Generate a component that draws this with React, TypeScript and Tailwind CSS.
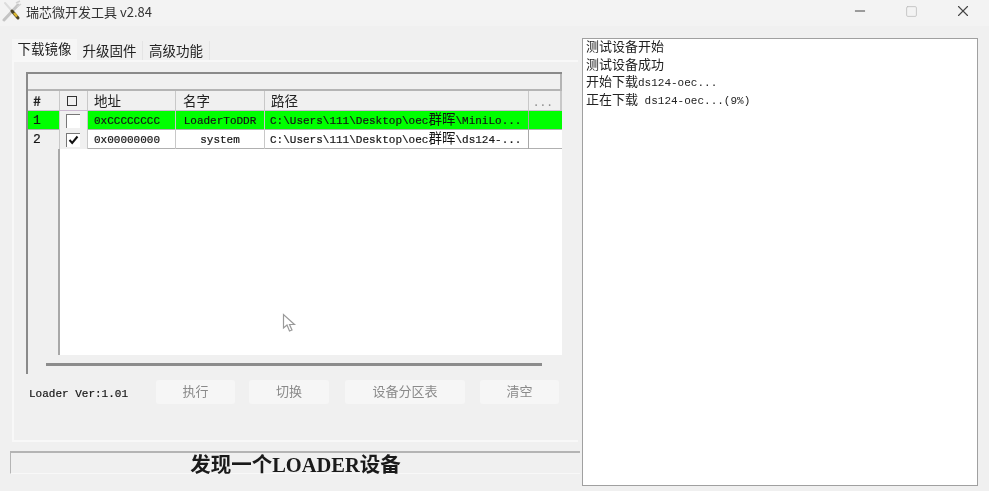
import { Minus, Square, X } from 'lucide-react';

const cjk = 'font-["Noto_Sans_CJK_SC",sans-serif]';
const mono = 'font-["Liberation_Mono","Noto_Sans_CJK_SC",monospace]';
const cols = 'grid grid-cols-[32px_28px_88px_89px_264px_1fr]';

const logLines = [
    { zh: '测试设备开始', en: '' },
    { zh: '测试设备成功', en: '' },
    { zh: '开始下载', en: 'ds124-oec...' },
    { zh: '正在下载', en: ' ds124-oec...(9%)' },
];

const rows = [
    {
        id: 1,
        checked: false,
        addr: '0xCCCCCCCC',
        name: 'LoaderToDDR',
        tail: '\\MiniLo...',
        green: true,
    },
    {
        id: 2,
        checked: true,
        addr: '0x00000000',
        name: 'system',
        tail: '\\ds124-...',
        green: false,
    },
];

function ToolsIcon() {
    return (
        <svg width="20" height="22" viewBox="0 0 20 22" fill="none">
            <path d="M2 20 L16 5" stroke="#c4c4c4" strokeWidth="3" strokeLinecap="round" />
            <path d="M14 3 L18 1 M15 7 L19 4" stroke="#d2d2d2" strokeWidth="1.5" />
            <path d="M3 3 L10 11" stroke="#dcdcdc" strokeWidth="2" strokeLinecap="round" />
            <path d="M10 11 L16 18" stroke="#4a4326" strokeWidth="3" strokeLinecap="round" />
            <path d="M12 13 L15 16.5" stroke="#d9b52f" strokeWidth="2.5" />
        </svg>
    );
}

function HeaderCell({ children, className = '' }: { children?: React.ReactNode; className?: string }) {
    return (
        <div className={`flex items-center border-r border-[#c8c8c8] bg-[#f0f0f0] text-[13.5px] leading-none text-[#222] ${className}`}>
            {children}
        </div>
    );
}

function Check({ checked }: { checked: boolean }) {
    return (
        <div className="flex h-[14px] w-[14px] items-center justify-center border-t border-l border-[#777] bg-white">
            {checked && (
                <svg width="11" height="10" viewBox="0 0 11 10" fill="none">
                    <path d="M1.5 5 L4.2 8 L9.5 1.5" stroke="#111" strokeWidth="2" />
                </svg>
            )}
        </div>
    );
}

function ActionButton({ label, className }: { label: string; className: string }) {
    return (
        <button className={`h-[24px] rounded-[3px] bg-[#f6f6f6] pb-[2px] text-[13px] text-[#8a8a8a] ${className}`}>{label}</button>
    );
}

export default function App() {
    return (
        <div className={`relative flex h-[491px] w-[989px] flex-col overflow-hidden bg-[#f0f0f0] blur-[0.5px] ${cjk}`}>
            {/* title bar */}
            <div className="flex h-[26px] items-start bg-[#f3f3f3] pl-[2px]">
                <ToolsIcon />
                <span className="ml-[4px] mt-[5px] text-[13px] leading-none text-[#333]">瑞芯微开发工具 v2.84</span>
                <div className="ml-auto mt-[2px] flex items-center gap-[36.5px] pr-[17px] text-[#444]">
                    <Minus size={16} strokeWidth={1.5} />
                    <Square size={13} strokeWidth={1.5} className="text-[#bdbdbd]" />
                    <X size={18} strokeWidth={1.5} />
                </div>
            </div>

            <div className="flex flex-1">
                {/* left side */}
                <div className="flex w-[582px] flex-col">
                    <div className="ml-[12px] mt-[13px] flex h-[21px] items-end text-[13.5px] text-[#222]">
                        <div className="flex h-[21px] w-[65px] items-center justify-center bg-[#f6f6f6] pb-[3px]">下载镜像</div>
                        <div className="flex h-[19px] w-[66px] items-center justify-center border-r border-[#e4e4e4]">升级固件</div>
                        <div className="flex h-[19px] w-[67px] items-center justify-center border-r border-[#e4e4e4]">高级功能</div>
                    </div>

                    <div className="ml-[12px] flex h-[382px] w-[566px] flex-col border-l-2 border-b-2 border-t-2 border-[#f8f8f8] pl-[12px] pt-[10px]">
                        {/* list box */}
                        <div className="flex h-[302px] w-[536px] flex-col border-t-2 border-l-2 border-[#8a8a8a]">
                            <div className="h-[17px] border-b-2 border-r-2 border-[#b4b4b4]" />
                            <div className={`${cols} h-[20px] border-b border-[#cbb8d0]`}>
                                <HeaderCell className="pl-[5px] font-bold">#</HeaderCell>
                                <HeaderCell className="pl-[7px]">
                                    <div className="h-[10px] w-[10px] border border-[#333]" />
                                </HeaderCell>
                                <HeaderCell className="pl-[6px]">地址</HeaderCell>
                                <HeaderCell className="pl-[7px]">名字</HeaderCell>
                                <HeaderCell className="pl-[6px]">路径</HeaderCell>
                                <HeaderCell className="items-end justify-center border-r-2 pb-[3px] text-[10px] tracking-[3px] text-[#888]">...</HeaderCell>
                            </div>

                            {rows.map(row => (
                                <div
                                    key={row.id}
                                    className={`${cols} h-[19px] border-b border-[#b0b0b0] text-[11px] text-[#111] [-webkit-text-stroke:0.2px_#222] ${mono} ${row.green ? 'bg-[#00ff00]' : 'bg-white'}`}
                                >
                                    <div className={`flex items-center border-r border-[#c8c8c8] pl-[5px] text-[13px] ${row.green ? '' : 'bg-[#f0f0f0]'}`}>
                                        {row.id}
                                    </div>
                                    <div className="flex items-center border-r border-[#c8c8c8] bg-[#f0f0f0] pl-[6px]">
                                        <Check checked={row.checked} />
                                    </div>
                                    <div className="flex items-center border-r border-[#c8c8c8] pl-[6px]">{row.addr}</div>
                                    <div className="flex items-center justify-center border-r border-[#c8c8c8]">{row.name}</div>
                                    <div className="flex items-center overflow-hidden whitespace-nowrap border-r border-[#a8a8a8] pl-[5px]">
                                        C:\Users\111\Desktop\oec<span className="text-[13.5px] [-webkit-text-stroke:0px]">群晖</span>{row.tail}
                                    </div>
                                    <div />
                                </div>
                            ))}

                            <div className="flex flex-1">
                                <div className="w-[32px] border-r-2 border-[#a8a8a8] bg-[#f0f0f0]" />
                                <div className="flex-1 bg-white" />
                            </div>

                            <div className="flex h-[19px] items-center pl-[18px]">
                                <div className="h-[3px] w-[496px] bg-[#8c8c8c]" />
                            </div>
                        </div>

                        {/* buttons row */}
                        <div className="mt-[6px] flex w-[536px] items-center">
                            <span className={`ml-[3px] w-[127px] pt-[4px] text-[11px] text-[#111] [-webkit-text-stroke:0.2px_#222] ${mono}`}>Loader Ver:1.01</span>
                            <ActionButton label="执行" className="w-[79px]" />
                            <ActionButton label="切换" className="ml-[14px] w-[80px]" />
                            <ActionButton label="设备分区表" className="ml-[16px] w-[120px]" />
                            <ActionButton label="清空" className="ml-[15px] w-[79px]" />
                        </div>
                    </div>

                    {/* status bar */}
                    <div className="ml-[10px] mt-[9px] flex h-[23px] w-[570px] items-center justify-center border-l border-t-2 border-[#b4b4b4] border-b border-b-[#f8f8f8] pt-[5px]">
                        <span className='font-["Liberation_Serif","Noto_Sans_CJK_SC",serif] text-[20.5px] font-bold leading-none text-[#1a1a1a]'>
                            发现一个LOADER设备
                        </span>
                    </div>
                </div>

                {/* log */}
                <div className="mt-[12px] h-[448px] w-[396px] border border-[#a0a0a0] bg-white pl-[3px]">
                    {logLines.map(line => (
                        <div key={line.zh + line.en} className={`h-[17.5px] whitespace-pre text-[13px] leading-[17.5px] text-[#222] ${mono}`}>
                            {line.zh}
                            <span className="text-[11px]">{line.en}</span>
                        </div>
                    ))}
                </div>
            </div>

            {/* mouse pointer captured in the shot */}
            <svg className="absolute left-[282px] top-[313px]" width="15" height="20" viewBox="0 0 15 20" fill="none">
                <path d="M1.5 1.5 V15 L5 12 L7.5 18 L10 17 L7.5 11.5 H12.5 Z" fill="#fff" stroke="#9a9a9a" strokeWidth="1.2" />
            </svg>
        </div>
    );
}
